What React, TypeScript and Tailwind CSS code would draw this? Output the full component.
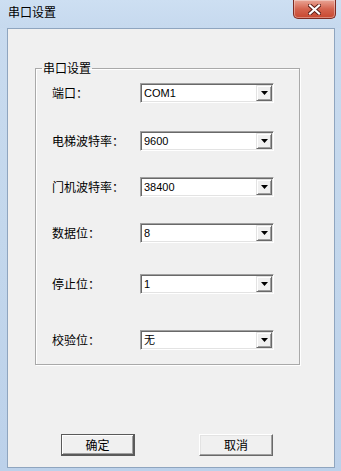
import React from "react";

const rows = [
  { label: "端口：", value: "COM1", mt: "mt-[8px]" },
  { label: "电梯波特率：", value: "9600", mt: "mt-[28px]" },
  { label: "门机波特率：", value: "38400", mt: "mt-[26px]" },
  { label: "数据位：", value: "8", mt: "mt-[26px]" },
  { label: "停止位：", value: "1", mt: "mt-[31px]" },
  { label: "校验位：", value: "无", mt: "mt-[36px]" },
];

const cjk = "font-['SimSun','Noto_Sans_CJK_SC',sans-serif]";

function Combo({ value }: { value: string }) {
  return (
    <div className="w-[134px] h-[20px] bg-white border border-t-[#a0a0a0] border-l-[#a0a0a0] border-r-white border-b-white shadow-[inset_1px_1px_0_#696969,inset_-1px_-1px_0_#e3e3e3] flex items-center">
      <span className={`flex-1 pl-[3px] text-[11px] leading-none text-black font-['Liberation_Sans','Noto_Sans_CJK_SC',sans-serif]`}>{value}</span>
      <div className="w-[16px] h-[16px] mr-[1px] bg-[#f0f0f0] border border-t-[#e3e3e3] border-l-[#e3e3e3] border-r-[#696969] border-b-[#696969] shadow-[inset_1px_1px_0_#fff,inset_-1px_-1px_0_#a0a0a0] flex items-center justify-center">
        <svg width="7" height="4" viewBox="0 0 7 4"><path d="M0 0h7L3.5 4z" fill="#000" /></svg>
      </div>
    </div>
  );
}

export default function App() {
  return (
    <div className={`w-[341px] h-[471px] flex flex-col bg-gradient-to-b from-[#c9dbef] via-[#c3d7ec] to-[#bcd1ea] ${cjk}`}>
      {/* 标题栏 */}
      <div className="h-[28px] shrink-0 flex items-start bg-gradient-to-b from-[#cddff2] to-[#c6d9ee]">
        <span className="pl-[8px] pt-[5px] text-[12px] leading-[14px] text-black">串口设置</span>
        <div className="ml-auto mr-[5px] w-[43px] h-[19px] rounded-b-[5px] border border-t-0 border-[#7d2b22] bg-gradient-to-b from-[#e9a596] via-[#d4644f] to-[#c7472f] flex items-center justify-center shadow-[inset_0_0_0_1px_rgba(255,255,255,0.35)]">
          <svg width="13" height="11" viewBox="0 0 13 11">
            <path d="M2 1.5l9 8M11 1.5l-9 8" stroke="#5b1d16" strokeWidth="4" strokeLinecap="square" />
            <path d="M2 1.5l9 8M11 1.5l-9 8" stroke="#fff" strokeWidth="2.2" strokeLinecap="square" />
          </svg>
        </div>
      </div>

      {/* 客户区 */}
      <div className="flex-1 ml-[7px] mr-[6px] mb-[3px] border border-[#8fa5bf] bg-[#f0f0f0] flex flex-col">
        <fieldset className="ml-[27px] mt-[32px] w-[265px] pl-[6px] pb-[14px] border border-[#a9a9a9] shadow-[1px_1px_0_#fff,inset_1px_1px_0_#fff]">
          <legend className="px-[1px] text-[12px] leading-[14px] text-black">串口设置</legend>
          {rows.map((r) => (
            <div key={r.label} className={`${r.mt} pl-[10px] h-[20px] flex items-center`}>
              <span className="w-[88px] text-[12px] leading-none text-black">{r.label}</span>
              <Combo value={r.value} />
            </div>
          ))}
        </fieldset>

        <div className="mt-[69px] pl-[53px] flex gap-[64px]">
          <button className="w-[74px] h-[22px] bg-[#f0f0f0] border border-[#5a5a5a] border-r-2 border-b-2 shadow-[inset_1px_1px_0_#fff,inset_-1px_-1px_0_#a0a0a0] text-[12px] leading-none text-black">
            确定
          </button>
          <button className="w-[74px] h-[22px] bg-[#f0f0f0] border border-t-white border-l-white border-r-[#696969] border-b-[#696969] shadow-[inset_-1px_-1px_0_#a0a0a0,inset_1px_1px_0_#e3e3e3] text-[12px] leading-none text-black">
            取消
          </button>
        </div>
      </div>
    </div>
  );
}
